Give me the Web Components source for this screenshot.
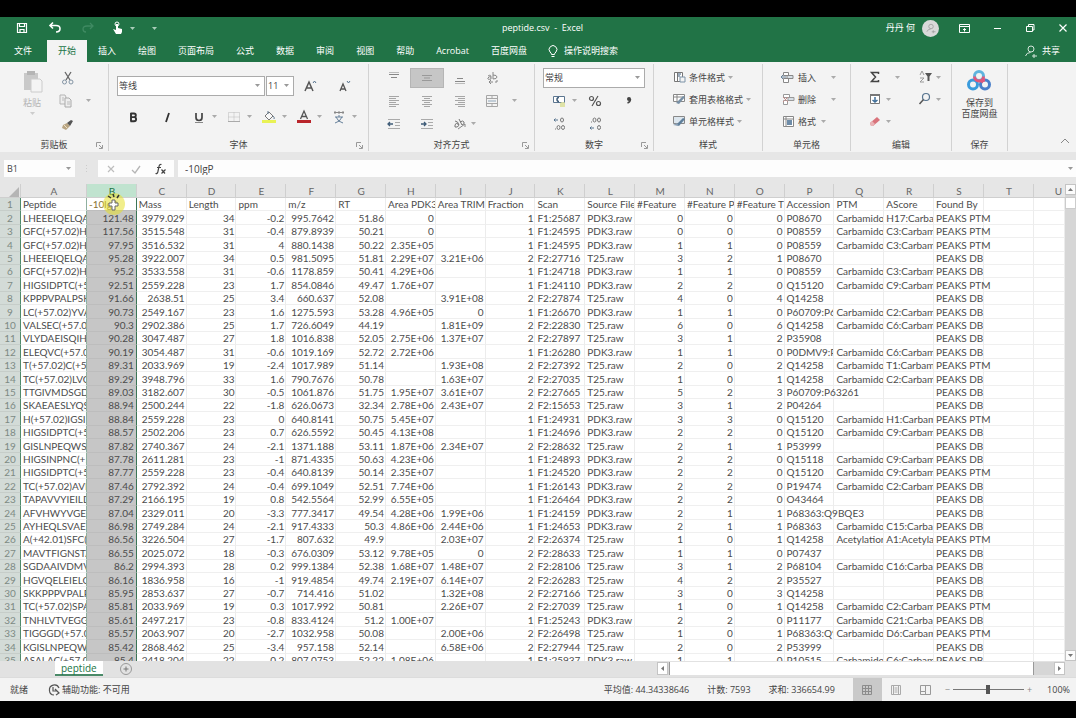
<!DOCTYPE html>
<html lang="zh-CN">
<head>
<meta charset="utf-8">
<meta name="viewport" content="width=device-width, initial-scale=1">
<title>peptide.csv - Excel</title>
<style>
  html, body { margin: 0; height: 100%; background: #000; }
  body { font: 9px/12px "Open Sans", "Noto Sans CJK SC", sans-serif; color: #444; }
</style>
</head>
<body>

<excel-app>
  <title-bar slot="top" name="peptide.csv&nbsp; -&nbsp; Excel" user="丹丹 何"></title-bar>
  <tab-bar slot="top"></tab-bar>
  <tool-ribbon slot="top">

    <ribbon-group label="剪贴板" launcher class="clipboard">
      <tool-button icon="paste" big caret disabled label="粘贴">粘贴</tool-button>
      <div class="stack">
        <tool-button icon="cut" label="剪切"></tool-button>
        <tool-button icon="copy" caret gap="wide" label="复制"></tool-button>
        <tool-button icon="brush" label="格式刷"></tool-button>
      </div>
    </ribbon-group>

    <ribbon-group label="字体" launcher class="font">
      <div class="fontline">
        <pick-list value="等线" label="字体名称"></pick-list>
        <pick-list value="11" label="字号"></pick-list>
        <tool-button icon="grow" label="增大字号"></tool-button>
        <tool-button icon="shrink" label="减小字号"></tool-button>
      </div>
      <div class="styleline">
        <tool-button icon="bold" label="加粗"></tool-button>
        <tool-button icon="italic" label="倾斜"></tool-button>
        <tool-button icon="underline" caret label="下划线"></tool-button>
        <tool-button icon="borders" caret label="边框"></tool-button>
        <tool-button icon="fill" caret label="填充颜色"></tool-button>
        <tool-button icon="color" caret label="字体颜色"></tool-button>
        <tool-button icon="phonetic" caret label="拼音"></tool-button>
      </div>
    </ribbon-group>

    <ribbon-group label="对齐方式" launcher class="align">
      <tool-button icon="top" label="顶端对齐"></tool-button>
      <tool-button icon="middle" active label="垂直居中"></tool-button>
      <tool-button icon="bottom" label="底端对齐"></tool-button>
      <tool-button icon="wrap" label="自动换行"></tool-button>
      <tool-button icon="left" label="左对齐"></tool-button>
      <tool-button icon="center" label="居中"></tool-button>
      <tool-button icon="right" label="右对齐"></tool-button>
      <tool-button icon="merge" caret gap="wide" label="合并后居中"></tool-button>
      <tool-button icon="outdent" label="减少缩进量"></tool-button>
      <tool-button icon="indent" label="增加缩进量"></tool-button>
      <tool-button icon="rotate" caret gap="none" label="方向"></tool-button>
    </ribbon-group>

    <ribbon-group label="数字" launcher class="number">
      <pick-list value="常规" label="数字格式"></pick-list>
      <div class="line">
        <tool-button icon="money" caret label="会计数字格式"></tool-button>
        <tool-button icon="percent" label="百分比样式"></tool-button>
        <tool-button icon="comma" label="千位分隔样式"></tool-button>
      </div>
      <div class="line">
        <tool-button icon="moredec" label="增加小数位数"></tool-button>
        <tool-button icon="lessdec" label="减少小数位数"></tool-button>
      </div>
    </ribbon-group>

    <ribbon-group label="样式" class="rows">
      <tool-button icon="conditional" caret gap="none">条件格式</tool-button>
      <tool-button icon="tablestyle" caret gap="none">套用表格格式</tool-button>
      <tool-button icon="cellstyle" caret gap="none">单元格样式</tool-button>
    </ribbon-group>

    <ribbon-group label="单元格" class="rows">
      <tool-button icon="insert" caret gap="far">插入</tool-button>
      <tool-button icon="delete" caret gap="far">删除</tool-button>
      <tool-button icon="format" caret>格式</tool-button>
    </ribbon-group>

    <ribbon-group label="编辑" class="edit">
      <tool-button icon="sum" caret gap="wide" label="自动求和"></tool-button>
      <tool-button icon="sort" caret gap="none" label="排序和筛选"></tool-button>
      <tool-button icon="filldown" caret gap="none" label="填充"></tool-button>
      <tool-button icon="find" caret gap="none" label="查找和选择"></tool-button>
      <tool-button icon="eraser" caret gap="none" label="清除"></tool-button>
    </ribbon-group>

    <ribbon-group label="保存" class="save">
      <tool-button icon="baidu" big label="保存到百度网盘">保存到<br>百度网盘</tool-button>
    </ribbon-group>

    <ribbon-group class="last">
      <tool-button icon="collapse" label="折叠功能区"></tool-button>
    </ribbon-group>
  </tool-ribbon>
  <formula-bar slot="top" cell="B1" value="-10lgP"></formula-bar>

  <data-sheet></data-sheet>

  <sheet-tabs slot="bottom"><span>peptide</span></sheet-tabs>
  <status-bar slot="bottom"></status-bar>
</excel-app>

<script>
const G = 'fill="none" stroke="#888"'

// 16x16 icon bodies, big ones are 24x24
const icons = {
  paste: '<path d="M4 4h14v17H4z" fill="#c9c9c9"/><path d="M7 2h8v4H7z" fill="#b5b5b5"/><path d="M11 10h9l2 2v11H11z" fill="#f4f4f4" stroke="#ccc"/>',
  cut: '<path d="M5 2l5 8M11 2L6 10" fill="none" stroke="#666" stroke-width="1.3"/><circle cx="4.5" cy="12" r="2" fill="none" stroke="#8495a5"/><circle cx="11" cy="12" r="2" fill="none" stroke="#8495a5"/>',
  copy: '<path d="M2 2h5l1 2v7H2z" fill="#eee" stroke="#b5b5b5"/><path d="M7 5h4l2 2v7H7z" fill="#eee" stroke="#aaa"/><path d="M4 5h2M4 7h2M9 9h3M9 11h3" stroke="#bbb"/>',
  brush: '<path d="M3 9l4-2 3 3-4 4-4-2z" fill="#b9a583"/><path d="M7 7l3 3 3-5-2-1z" fill="#555"/><path d="M4 9l3 3" stroke="#efe1c2"/>',
  grow: '<path d="M3 13L7 4l4 9M4.500 10h5" fill="none" stroke="#555" stroke-width="1.500"/><path d="M11 5l1.500-2L14 5" fill="none" stroke="#57748f"/>',
  shrink: '<path d="M4 13l3-7 3 7M5 11h4" fill="none" stroke="#555" stroke-width="1.300"/><path d="M11 3l1.500 2L14 3" fill="none" stroke="#57748f"/>',
  bold: '<path d="M6 4v8.500M5.500 4.500H9a1.700 1.700 0 010 3.600H6h3a2 2 0 010 4.200H5.500" fill="none" stroke="#333" stroke-width="1.900"/>',
  italic: '<path d="M10 4L7 13" fill="none" stroke="#333" stroke-width="1.800"/>',
  underline: '<path d="M5 4v4.500q0 3 3 3t3-3V4" fill="none" stroke="#444" stroke-width="1.700"/><path d="M4 13.500h8" stroke="#888"/>',
  borders: '<path d="M2.500 3.500h11v9h-11zM8 3.500v9M2.500 8h11" fill="none" stroke="#bbb" stroke-dasharray="1 1"/><path d="M2 12.500h12" stroke="#aaa"/>',
  fill: '<path d="M4 7l4-4 4 4-4 4z" fill="#f8f8f8" stroke="#777"/><path d="M7 5V2M12 7q2 2 1 3" fill="none" stroke="#60788e"/><path d="M1 11h14v3H1z" fill="#e9f255"/>',
  color: '<path d="M4.500 10L8 2l3.500 8M6 7.500h4" fill="none" stroke="#555" stroke-width="1.300"/><path d="M1 11h14v3H1z" fill="#b9252b"/>',
  phonetic: '<path d="M3 3.500h10M4 2v3M8 2v3M12 2v3" stroke="#888"/><path d="M4 8h8M8 6v2M5 8q2 5 7 6M11 8q-2 5-7 6" fill="none" stroke="#66809a"/>',
  top: `<path d="M3 4.500h10M5 7.500h6" ${G}/><path d="M3 2.500h10" stroke="#bbb"/>`,
  middle: '<path d="M3 5.500h10M5 8h6M3 10.500h10" stroke="#999"/>',
  bottom: `<path d="M5 8.500h6M3 11.500h10" ${G}/><path d="M3 13.500h10" stroke="#bbb"/>`,
  wrap: `<path d="M3 6q3-2 3 1v2q-4 1-3-1t3-1M8 2v7q4 0 4-2t-4-2M8 12H4l2-2M4 12l2 2M12 10v2h-2" ${G}/>`,
  left: '<path d="M3 3.500h10M3 5.500h7M3 7.500h10M3 9.500h7M3 11.500h10M3 13.500h7" stroke="#a6a6a6"/>',
  center: '<path d="M3 3.500h10M5 5.500h6M3 7.500h10M5 9.500h6M3 11.500h10M5 13.500h6" stroke="#a6a6a6"/>',
  right: '<path d="M3 3.500h10M6 5.500h7M3 7.500h10M6 9.500h7M3 11.500h10M6 13.500h7" stroke="#a6a6a6"/>',
  merge: '<path d="M2.500 2.500h11v11h-11zM2.500 5.500h11M2.500 10.500h11M8 3v2M8 11v2" fill="none" stroke="#a6a6a6"/><path d="M4 8h8" stroke="#8fa5b8"/>',
  outdent: '<path d="M2 3.500h12M9 6.500h5M9 9.500h5M2 12.500h12" stroke="#aaa"/><path d="M7 8H2M4 6L2 8l2 2" fill="none" stroke="#3f5c78" stroke-width="1.300"/>',
  indent: '<path d="M2 3.500h12M9 6.500h5M9 9.500h5M2 12.500h12" stroke="#aaa"/><path d="M2 8h5M5 6l2 2-2 2" fill="none" stroke="#3f5c78" stroke-width="1.300"/>',
  rotate: '<path d="M3 5q3 0 4 4M3 9q1-3 3-1t-1 3-2-2M7 3l3 6q3-1 2-3T8 6" fill="none" stroke="#777"/><path d="M6 13l7-5M13 8v3" fill="none" stroke="#888"/>',
  money: '<path d="M2.500 3.500h11v6h-11z" fill="#fff" stroke="#5c7690"/><path d="M8 4.500q-2 0-2 2t2 2" fill="none" stroke="#3f5c78" stroke-width="1.500"/><path d="M9 10q3-2 5 0v4H9z" fill="#dfe3a7"/>',
  percent: '<circle cx="4.500" cy="5.500" r="2" fill="none" stroke="#555" stroke-width="1.200"/><circle cx="11.500" cy="10.500" r="2" fill="none" stroke="#555" stroke-width="1.200"/><path d="M11 3L5 13" stroke="#555" stroke-width="1.200"/>',
  comma: '<circle cx="8" cy="6" r="2" fill="#444"/><path d="M9.500 6q0 3-3 4" fill="none" stroke="#444" stroke-width="1.500"/>',
  moredec: '<path d="M7 4H3M4.500 2.500L3 4l1.500 1.500" fill="none" stroke="#57748f"/><ellipse cx="11" cy="4" rx="1.500" ry="2" fill="none" stroke="#777"/><ellipse cx="7.500" cy="11.500" rx="1.500" ry="2" fill="none" stroke="#777"/><ellipse cx="12" cy="11.500" rx="1.500" ry="2" fill="none" stroke="#777"/><path d="M4 13h1" stroke="#777"/>',
  lessdec: '<path d="M3 12h4M4.500 10.500L3 12l1.500 1.500" fill="none" stroke="#57748f"/><ellipse cx="7.500" cy="4" rx="1.500" ry="2" fill="none" stroke="#777"/><ellipse cx="12" cy="4" rx="1.500" ry="2" fill="none" stroke="#777"/><ellipse cx="12" cy="11.500" rx="1.500" ry="2" fill="none" stroke="#777"/><path d="M4 6h1" stroke="#777"/>',
  conditional: '<path d="M3.500 3.500h8v9h-8zM6.500 3v9" fill="#fff" stroke="#777"/><path d="M7 5h3M7 7h2" stroke="#7d93a8" stroke-width="1.500"/><path d="M9 8h5v5H9z" fill="#f4f4f4" stroke="#7d93a8"/>',
  tablestyle: '<path d="M2.500 3.500h11v7h-11zM2.500 6h11M6 3.500v7" fill="#fff" stroke="#888"/><path d="M5 12l7-7 2 1-6 7z" fill="#7890a6"/>',
  cellstyle: '<path d="M2.500 3.500h11v7h-11z" fill="#dce6ee" stroke="#888"/><path d="M5 12l7-7 2 1-6 7z" fill="#5f7f9b"/><path d="M2 12l4-2 2 3z" fill="#8aa0b5"/>',
  insert: '<path d="M3.500 3.500h5v3h-5zM3.500 9.500h5v4h-5z" fill="#fff" stroke="#888"/><path d="M7 6.500h6v3H7z" fill="#d7dfe6" stroke="#888"/><path d="M6 8H1M3 6L1 8l2 2" fill="none" stroke="#69839b"/>',
  delete: '<path d="M3.500 3.500h6v3h-6zM3.500 9.500h4v4h-4z" fill="#fff" stroke="#999"/><path d="M8 6.500h6v3H8z" fill="#d7dfe6" stroke="#999"/><path d="M3 6l5 5M8 6l-5 5" stroke="#c28a88"/>',
  format: '<path d="M3.500 3.500h10v10h-10zM3.500 6h10M6 3.500v10" fill="#fff" stroke="#888"/><path d="M7 7h5v5H7z" fill="#6e8ca8"/>',
  sum: '<path d="M11.500 5V3.500h-7L8.500 8l-4 4.500h7V11" fill="none" stroke="#444" stroke-width="1.500"/>',
  sort: '<path d="M3 6l2-4 2 4M3 9h4l-4 4h4" fill="none" stroke="#999"/><path d="M8 4h7l-2.500 3.500V12h-2V7.500z" fill="#555"/>',
  filldown: '<path d="M3.500 3.500h9v9h-9z" fill="#fff" stroke="#777"/><path d="M3 4h10" stroke="#777" stroke-width="2"/><path d="M8 6v5M5.500 9L8 11l2.500-2" fill="none" stroke="#3f6f9a" stroke-width="1.500"/>',
  find: '<circle cx="9" cy="6" r="3.500" fill="none" stroke="#57748f" stroke-width="1.200"/><path d="M6.500 8.500L2.500 13" stroke="#555" stroke-width="1.500"/>',
  eraser: '<path d="M3 10l7-6 3 3-7 6H4z" fill="#d9737b"/><path d="M3 10l2-2 3 3-2 2H4z" fill="#e9b3b6"/>',
  baidu: '<g fill="none" stroke-width="3"><circle cx="12" cy="7" r="4.500" stroke="#5fb3de"/><circle cx="6" cy="15.500" r="4.500" stroke="#3a9bdc"/><circle cx="18" cy="15.500" r="4.500" stroke="#4a7fc9"/><path d="M7.500 7.500a4.500 4.500 0 009 0" stroke="#e0587c"/><path d="M14 13.500a4.500 4.500 0 014-2.500" stroke="#e0587c"/></g>',
  collapse: '<path d="M5 10l4-4 4 4" fill="none" stroke="#888"/>',
  save: '<path d="M3.500 3.500h9v9h-9zM5.500 3.500v3h5v-3M6 12.500v-3h4v3" fill="none" stroke="#fff" stroke-width="1.200"/>',
  undo: '<path d="M6 2.500L3 5.500l3 3M3 5.500h6q4 0 4 3.200T9 12" fill="none" stroke="#fff" stroke-width="1.600"/>',
  redo: '<path d="M10 3l3 3-3 3M13 6H7q-4 0-4 3t3 3" fill="none" stroke="#3f8a62" stroke-width="1.300"/>',
  touch: '<circle cx="7" cy="4" r="2" fill="none" stroke="#fff"/><path d="M6 4h2v4l4 1v3l-1 2H6L3 9l3 1z" fill="#fff"/>',
  display: '<path d="M3.500 4.500h10v8h-10zM3.500 6.500h10M8.500 11.500v-3M7 10l1.500-1.500L10 10" fill="none" stroke="#fff"/>',
  min: '<path d="M5 8.500h7" stroke="#fff"/>',
  restore: '<path d="M4.500 6.500h6v5h-6zM6.500 6V4.500h5.500v5.500h-1" fill="none" stroke="#fff"/>',
  close: '<path d="M4.500 4.500l7 7M11.500 4.500l-7 7" stroke="#fff" stroke-width="1.200"/>',
  bulb: '<path d="M6.500 11.500q0-1.500-1.500-2.500a3.900 3.900 0 116 0q-1.500 1-1.500 2.500zM6.500 13.500h3" fill="none" stroke="#fff"/>',
  person: '<circle cx="8" cy="6" r="3" fill="none" stroke="#d6e6dc"/><path d="M2.500 13q1-3.500 5-3.500M11 11v4M9 13h5" fill="none" stroke="#d6e6dc"/>',
  cancel: '<path d="M5 5l6 6M11 5l-6 6" stroke="#bdbdbd" stroke-width="1.200"/>',
  enter: '<path d="M4 9l3 3 5-7" fill="none" stroke="#b5b5b5" stroke-width="1.300"/>',
  fx: '<path d="M8.500 3.500q-2-.5-2.500 2L4.800 11q-.5 2-2.300 1.500M4 6.500h4M8.500 8.500l3.500 4M12.500 8.500l-4 4" fill="none" stroke="#444" stroke-width="1.200"/>',
  plus: '<circle cx="8" cy="8" r="5.500" fill="none" stroke="#999"/><path d="M8 5.500v5M5.500 8h5" stroke="#777"/>',
  access: '<path d="M13 6A5 5 0 108 13M7 5v4h4l-2-2M11 9l2 2-3 2" fill="none" stroke="#555" stroke-width="1.200"/>',
  normal: '<path d="M3.500 3.500h9v9h-9zM3.500 6.500h9M3.500 9.500h9M6.500 3.500v9M9.500 3.500v9" fill="none" stroke="#8c8c8c"/>',
  layout: '<path d="M3.500 3.500h9v9h-9zM5.500 3.500v9M10.500 3.500v9M6.500 6h3M6.500 8h3M6.500 10h3" fill="none" stroke="#aaa"/>',
  pagebreak: '<path d="M3.500 3.500h10v9h-10zM3.500 9.500h5v-6M8.500 9.500v3" fill="none" stroke="#999"/>'
}

const svg = (name, size = 16, box = 16) =>
  `<svg width="${size}" height="${size}" viewBox="0 0 ${box} ${box}" aria-hidden="true">${icons[name]}</svg>`

const caret = '<svg class="caret" width="5" height="3" viewBox="0 0 5 3" aria-hidden="true"><path d="M0 0h5L2.500 3z" fill="currentColor"/></svg>'

const reset = `
  * { box-sizing: border-box; }
  svg { display: block; flex: none; }
  button, input, select { font: inherit; color: inherit; margin: 0; padding: 0; border: 0; background: none; border-radius: 0; outline: 0; }
`


class ExcelApp extends HTMLElement {
  constructor() {
    super()
    this.attachShadow({ mode: 'open' }).innerHTML = `
    <style>
      :host { display: flex; flex-direction: column; height: 100vh; box-sizing: border-box; padding: 17px 0; background: #000; }
      main { flex: 1; min-height: 0; display: flex; flex-direction: column; background: #e6e6e6; }
      .body { flex: 1; min-height: 0; display: flex; }
      ::slotted(data-sheet) { flex: 1; min-width: 0; }
    </style>
    <main>
      <slot name="top"></slot>
      <div class="body"><slot></slot></div>
      <slot name="bottom"></slot>
    </main>`
  }
}
customElements.define('excel-app', ExcelApp)


class TitleBar extends HTMLElement {
  connectedCallback() {
    this.attachShadow({ mode: 'open' }).innerHTML = `
    <style>${reset}
      :host { display: grid; grid-template-columns: 1fr auto 1fr; align-items: center; height: 22px; background: #217346; color: #fff; padding: 0 5px 0 14px; }
      .quick, .window { display: flex; align-items: center; }
      .quick { gap: 17px; }
      .touch { display: flex; align-items: center; gap: 4px; margin-left: -3px; }
      .window { justify-content: flex-end; gap: 17px; }
      .who { display: flex; align-items: center; gap: 7px; }
      .face { width: 17px; height: 17px; border-radius: 50%; background: #d9d9d9; display: flex; align-items: center; justify-content: center; }
      .face circle, .face path { stroke: #999; }
      .caret { color: #a9cdb9; }
    </style>
    <div class="quick">
      <button aria-label="保存">${svg('save')}</button>
      <button aria-label="撤消">${svg('undo')}</button>
      <button aria-label="恢复">${svg('redo')}</button>
      <button class="touch" aria-label="触摸/鼠标模式">${svg('touch')}${caret}</button>
      <button aria-label="自定义快速访问工具栏">${caret}</button>
    </div>
    <span>${this.getAttribute('name')}</span>
    <div class="window">
      <div class="who"><span>${this.getAttribute('user')}</span><span class="face">${svg('person', 12)}</span></div>
      <button aria-label="功能区显示选项">${svg('display')}</button>
      <button aria-label="最小化">${svg('min')}</button>
      <button aria-label="还原">${svg('restore')}</button>
      <button aria-label="关闭">${svg('close')}</button>
    </div>`
  }
}
customElements.define('title-bar', TitleBar)


class TabBar extends HTMLElement {
  connectedCallback() {
    const tabs = ['开始', '插入', '绘图', '页面布局', '公式', '数据', '审阅', '视图', '帮助', 'Acrobat', '百度网盘']
    this.attachShadow({ mode: 'open' }).innerHTML = `
    <style>${reset}
      :host { display: flex; align-items: stretch; height: 23px; background: #217346; color: #fff; padding-right: 16px; }
      button { padding: 0 11px; white-space: nowrap; }
      .file { margin-right: 4px; padding-left: 14px; }
      .on { background: #f3f3f3; color: #217346; margin-top: 1px; }
      .tell, .share { display: flex; align-items: center; gap: 3px; }
      .tell { padding-left: 7px; }
      .share { margin-left: auto; padding: 0; }
    </style>
    <button class="file">文件</button>
    ${tabs.map((t, i) => `<button class="${i === 0 ? 'on' : ''}">${t}</button>`).join('')}
    <button class="tell">${svg('bulb')}操作说明搜索</button>
    <button class="share">${svg('person')}共享</button>`
  }
}
customElements.define('tab-bar', TabBar)


class ToolRibbon extends HTMLElement {
  constructor() {
    super()
    this.attachShadow({ mode: 'open' }).innerHTML = `
    <style>
      :host { display: grid; grid-template-columns: 109fr 260fr 166fr 119fr 109fr 88fr 101fr 56fr 68fr; height: 90px; background: #f3f3f3; }
    </style>
    <slot></slot>`
  }
}
customElements.define('tool-ribbon', ToolRibbon)


class RibbonGroup extends HTMLElement {
  connectedCallback() {
    const label = this.getAttribute('label') || ''
    this.attachShadow({ mode: 'open' }).innerHTML = `
    <style>${reset}
      :host { display: flex; flex-direction: column; min-width: 0; border-right: 1px solid #d2d2d2; margin: 2px 0; }
      :host(.last) { border: 0; }
      .tools { flex: none; height: 69px; margin-top: 2px; display: grid; grid-template-rows: repeat(3, 23px); align-items: center; }
      :host(.clipboard) .tools { grid-template: 69px / 56px 1fr; padding-left: 4px; justify-items: center; }
      :host(.font) .tools { grid-template-rows: 39px 23px; padding-left: 8px; }
      :host(.align) .tools { grid-template-columns: repeat(4, 33px); padding-left: 8px; justify-items: center; }
      :host(.number) .tools { padding: 0 8px; }
      :host(.rows) .tools { grid-template-rows: repeat(3, 22px); padding-left: 17px; }
      :host(.edit) .tools { grid-template: repeat(3, 22px) / 50px 1fr; padding-left: 16px; }
      :host(.save) .tools { grid-template: 69px / 1fr; justify-items: center; }
      :host(.last) .tools { flex: 1; grid-template: 1fr / 1fr; align-items: end; justify-items: end; padding-right: 4px; }
      footer { flex: 1; display: grid; grid-template-columns: 12px 1fr 12px; align-items: center; text-align: center; padding-top: 4px; }
      :host(.last) footer { display: none; }
      footer span { grid-column: 2; }
      ::slotted(.stack) { display: grid; grid-template-rows: repeat(3, 23px); align-items: center; justify-self: stretch; }
      ::slotted(.fontline) { display: grid; grid-template-columns: 148px 28px 23px 33px; gap: 0 1px; align-items: center; justify-items: end; width: max-content; }
      ::slotted(.styleline) { display: grid; grid-template-columns: 34px 32px 35px 35px 35px 35px 26px; padding-left: 8px; }
      ::slotted(.line) { display: grid; grid-template-columns: 36px 34px 20px; padding-left: 8px; }
    </style>
    <div class="tools"><slot></slot></div>
    <footer><span>${label}</span>${this.hasAttribute('launcher') ? `<button aria-label="${label}设置"><svg width="7" height="7" viewBox="0 0 7 7"><path d="M.5 5V.5H5M3 3l3 3M6.500 3v3.500H3" fill="none" stroke="#999"/></svg></button>` : ''}</footer>`
  }
}
customElements.define('ribbon-group', RibbonGroup)


class ToolButton extends HTMLElement {
  connectedCallback() {
    const big = this.hasAttribute('big')
    const label = this.getAttribute('label')
    this.attachShadow({ mode: 'open' }).innerHTML = `
    <style>${reset}
      :host { display: block; width: max-content; }
      button { display: flex; align-items: center; height: 20px; gap: 2px; white-space: nowrap; }
      .caret { color: #aaa; margin-left: 3px; }
      :host([gap=none]) .caret { margin-left: 1px; }
      :host([gap=wide]) .caret { margin-left: 10px; }
      :host([gap=far]) .caret { margin-left: 13px; }
      :host([active]) button { background: #c6c6c6; padding: 0 8px; border: 1px solid #b5b5b5; }
      :host([big]) button { flex-direction: column; height: 64px; gap: 4px; }
      :host([big]) .caret { margin: 0; color: #ccc; }
      :host([disabled]) { color: #b5b5b5; }
      .text { line-height: 11px; text-align: center; }
      :host([icon=copy]) button { margin-left: -2px; }
      :host([icon=merge]) button { margin-right: -16px; }
      :host([icon=rotate]) button { margin-right: -8px; }
    </style>
    <button ${label ? `aria-label="${label}"` : ''}>
      ${big ? svg(this.getAttribute('icon'), 24, 24) : svg(this.getAttribute('icon'))}
      ${this.textContent.trim() ? '<span class="text"><slot></slot></span>' : ''}
      ${this.hasAttribute('caret') ? caret : ''}
    </button>`
  }
}
customElements.define('tool-button', ToolButton)


class PickList extends HTMLElement {
  connectedCallback() {
    this.attachShadow({ mode: 'open' }).innerHTML = `
    <style>${reset}
      :host { display: grid; grid-template-columns: 1fr 9px; align-items: center; justify-self: stretch; height: 20px; background: #fff; border: 1px solid #ababab; box-sizing: border-box; }
      select { grid-area: 1 / 1 / 2 / 3; appearance: none; width: 100%; height: 100%; padding-left: 1px; }
      .caret { grid-area: 1 / 2; color: #999; pointer-events: none; }
    </style>
    <select aria-label="${this.getAttribute('label')}"><option>${this.getAttribute('value')}</option></select>${caret}`
  }
}
customElements.define('pick-list', PickList)


class FormulaBar extends HTMLElement {
  connectedCallback() {
    this.attachShadow({ mode: 'open' }).innerHTML = `
    <style>${reset}
      :host { display: grid; grid-template-columns: 71px 15px 76px 1fr; gap: 4px; padding: 8px 0 7px 4px; }
      div, label { display: flex; align-items: center; height: 17px; background: #fdfdfd; }
      .name { padding: 0 4px 0 3px; }
      .name input { flex: 1; min-width: 0; }
      .dots { background: none; justify-content: center; }
      .keys { justify-content: space-around; }
      .formula { padding: 0 3px 0 7px; font-size: 10px; }
      .formula input { flex: 1; min-width: 0; }
      .caret { color: #999; }
    </style>
    <label class="name"><input aria-label="名称框" value="${this.getAttribute('cell')}">${caret}</label>
    <div class="dots"><svg width="3" height="9" viewBox="0 0 3 9"><path d="M1 1h1v1H1zM1 4h1v1H1zM1 7h1v1H1z" fill="#ccc"/></svg></div>
    <div class="keys">
      <button aria-label="取消">${svg('cancel')}</button>
      <button aria-label="输入">${svg('enter')}</button>
      <button aria-label="插入函数">${svg('fx')}</button>
    </div>
    <label class="formula"><input aria-label="编辑栏" value="${this.getAttribute('value')}">${caret}</label>`
  }
}
customElements.define('formula-bar', FormulaBar)


const rows = `
Peptide|-10lgP|Mass|Length|ppm|m/z|RT|Area PDK3|Area TRIM|Fraction|Scan|Source File|#Feature|#Feature P|#Feature T|Accession|PTM|AScore|Found By
LHEEEIQELQAQ|121.48|3979.029|34|-0.2|995.7642|51.86|0||1|F1:25687|PDK3.raw|0|0|0|P08670|Carbamido|H17:Carba|PEAKS PTM
GFC(+57.02)HL|117.56|3515.548|31|-0.4|879.8939|50.21|0||1|F1:24595|PDK3.raw|0|0|0|P08559|Carbamido|C3:Carbam|PEAKS PTM
GFC(+57.02)HL|97.95|3516.532|31|4|880.1438|50.22|2.35E+05||1|F1:24595|PDK3.raw|1|1|0|P08559|Carbamido|C3:Carbam|PEAKS PTM
LHEEEIQELQAQ|95.28|3922.007|34|0.5|981.5095|51.81|2.29E+07|3.21E+06|2|F2:27716|T25.raw|3|2|1|P08670|||PEAKS DB
GFC(+57.02)HL|95.2|3533.558|31|-0.6|1178.859|50.41|4.29E+06||1|F1:24718|PDK3.raw|1|1|0|P08559|Carbamido|C3:Carbam|PEAKS DB
HIGSIDPTC(+57|92.51|2559.228|23|1.7|854.0846|49.47|1.76E+07||1|F1:24110|PDK3.raw|2|2|0|Q15120|Carbamido|C9:Carbam|PEAKS PTM
KPPPVPALPSKL|91.66|2638.51|25|3.4|660.637|52.08||3.91E+08|2|F2:27874|T25.raw|4|0|4|Q14258|||PEAKS DB
LC(+57.02)YVAL|90.73|2549.167|23|1.6|1275.593|53.28|4.96E+05|0|1|F1:26670|PDK3.raw|1|1|0|P60709:P63|Carbamido|C2:Carbam|PEAKS DB
VALSEC(+57.02|90.3|2902.386|25|1.7|726.6049|44.19||1.81E+09|2|F2:22830|T25.raw|6|0|6|Q14258|Carbamido|C6:Carbam|PEAKS DB
VLYDAEISQIHQ|90.28|3047.487|27|1.8|1016.838|52.05|2.75E+06|1.37E+07|2|F2:27897|T25.raw|3|1|2|P35908|||PEAKS DB
ELEQVC(+57.02|90.19|3054.487|31|-0.6|1019.169|52.72|2.72E+06||1|F1:26280|PDK3.raw|1|1|0|P0DMV9:P0|Carbamido|C6:Carbam|PEAKS DB
T(+57.02)C(+57|89.31|2033.969|19|-2.4|1017.989|51.14||1.93E+08|2|F2:27392|T25.raw|2|0|2|Q14258|Carbamido|T1:Carbam|PEAKS PTM
TC(+57.02)LVQ|89.29|3948.796|33|1.6|790.7676|50.78||1.63E+07|2|F2:27035|T25.raw|1|0|1|Q14258|Carbamido|C2:Carbam|PEAKS DB
TTGIVMDSGDG|89.03|3182.607|30|-0.5|1061.876|51.75|1.95E+07|3.61E+07|2|F2:27665|T25.raw|5|2|3|P60709:P63261|||PEAKS DB
SKAEAESLYQSK|88.94|2500.244|22|-1.8|626.0673|32.34|2.78E+06|2.43E+07|2|F2:15653|T25.raw|3|1|2|P04264|||PEAKS DB
H(+57.02)IGSID|88.84|2559.228|23|0|640.8141|50.75|5.45E+07||1|F1:24931|PDK3.raw|3|3|0|Q15120|Carbamido|H1:Carbam|PEAKS PTM
HIGSIDPTC(+57|88.57|2502.206|23|0.7|626.5592|50.45|4.13E+08||1|F1:24696|PDK3.raw|2|2|0|Q15120|Carbamido|C9:Carbam|PEAKS DB
GISLNPEQWSQ|87.82|2740.367|24|-2.1|1371.188|53.11|1.87E+06|2.34E+07|2|F2:28632|T25.raw|2|1|1|P53999|||PEAKS DB
HIGSINPNC(+57|87.78|2611.281|23|-1|871.4335|50.63|4.23E+06||1|F1:24893|PDK3.raw|2|2|0|Q15118|Carbamido|C9:Carbam|PEAKS DB
HIGSIDPTC(+57|87.77|2559.228|23|-0.4|640.8139|50.14|2.35E+07||1|F1:24520|PDK3.raw|2|2|0|Q15120|Carbamido|C9:Carbam|PEAKS PTM
TC(+57.02)AVL|87.46|2792.392|24|-0.4|699.1049|52.51|7.74E+06||1|F1:26143|PDK3.raw|2|2|0|P19474|Carbamido|C2:Carbam|PEAKS DB
TAPAVVYIEILD|87.29|2166.195|19|0.8|542.5564|52.99|6.55E+05||1|F1:26464|PDK3.raw|2|2|0|O43464|||PEAKS DB
AFVHWYVGEG|87.04|2329.011|20|-3.3|777.3417|49.54|4.28E+06|1.99E+06|1|F1:24159|PDK3.raw|2|1|1|P68363:Q9BQE3|||PEAKS DB
AYHEQLSVAEI|86.98|2749.284|24|-2.1|917.4333|50.3|4.86E+06|2.44E+06|1|F1:24653|PDK3.raw|2|1|1|P68363|Carbamido|C15:Carba|PEAKS DB
A(+42.01)SFC(+|86.56|3226.504|27|-1.7|807.632|49.9||2.03E+07|2|F2:26374|T25.raw|1|0|1|Q14258|Acetylation|A1:Acetyla|PEAKS PTM
MAVTFIGNSTA|86.55|2025.072|18|-0.3|676.0309|53.12|9.78E+05|0|2|F2:28633|T25.raw|1|1|0|P07437|||PEAKS DB
SGDAAIVDMVP|86.2|2994.393|28|0.2|999.1384|52.38|1.68E+07|1.48E+07|2|F2:28106|T25.raw|3|1|2|P68104|Carbamido|C16:Carba|PEAKS DB
HGVQELEIELQS|86.16|1836.958|16|-1|919.4854|49.74|2.19E+07|6.14E+07|2|F2:26283|T25.raw|4|2|2|P35527|||PEAKS DB
SKKPPPVPALPS|85.95|2853.637|27|-0.7|714.416|51.02||1.32E+08|2|F2:27166|T25.raw|3|0|3|Q14258|||PEAKS DB
TC(+57.02)SPAL|85.81|2033.969|19|0.3|1017.992|50.81||2.26E+07|2|F2:27039|T25.raw|1|0|1|Q14258|Carbamido|C2:Carbam|PEAKS PTM
TNHLVTVEGGW|85.61|2497.217|23|-0.8|833.4124|51.2|1.00E+07||1|F1:25243|PDK3.raw|2|2|0|P11177|Carbamido|C21:Carba|PEAKS DB
TIGGGD(+57.02|85.57|2063.907|20|-2.7|1032.958|50.08||2.00E+06|2|F2:26498|T25.raw|1|0|1|P68363:Q9|Carbamido|D6:Carbam|PEAKS PTM
KGISLNPEQWS|85.42|2868.462|25|-3.4|957.158|52.14||6.58E+06|2|F2:27944|T25.raw|2|0|2|P53999|||PEAKS DB
ASALAC(+57.02|85.4|2418.204|22|0.2|807.0753|52.22|1.08E+06||1|F1:25937|PDK3.raw|1|1|0|P10515|Carbamido|C6:Carbam|PEAKS DB
`.trim().split('\n').map(line => line.split('|'))

const letters = 'ABCDEFGHIJKLMNOPQRSTU'.split('')

class DataSheet extends HTMLElement {

  cell(row, c) {
    const text = row[c] || ''
    const cls = []
    if (/^-?[\d.]+(E\+\d+)?$/.test(text)) cls.push('num')
    if (text && !row[c + 1]) cls.push('spill')
    return `<td class="${cls.join(' ')}">${text}</td>`
  }

  connectedCallback() {
    this.attachShadow({ mode: 'open' }).innerHTML = `
    <style>${reset}
      :host { display: grid; grid-template-columns: 1fr 11px; min-height: 0; overflow: hidden; }
      .view { overflow: hidden; position: relative; background: #fff; }
      table { table-layout: fixed; width: 100%; border-collapse: separate; border-spacing: 0; font: 10px/12px Lato, sans-serif; color: #4c4c4c; }
      .rh { width: 21px; }
      .a { width: 66px; }
      .u { width: 31px; }
      tr { height: 13px; }
      tbody tr:nth-child(5n+2), tbody tr:nth-child(5n+4) { height: 14px; }
      thead tr { height: 14px; }
      th, td { padding: 0 1px 0 2px; white-space: nowrap; overflow: hidden; border-right: 1px solid #ececec; border-bottom: 1px solid #efefef; text-align: left; font-weight: 400; }
      .num { text-align: right; }
      .spill { overflow: visible; }
      thead th { background: #e6e6e6; border-color: #cfcfcf; text-align: center; color: #666; }
      thead th:last-child { text-align: right; padding-right: 3px; border-right: 0; }
      thead .sel { background: #c0e3cf; color: #217346; }
      tbody th { background: #d3dbd7; border-right: 1px solid #4f8a6b; border-bottom-color: #c6cdc9; text-align: center; color: #7d8a84; padding: 0; }
      td:nth-child(2) { border-right-color: #8fb09f; }
      td:nth-child(3) { background: #c6c6c6; border-right-color: #3b7556; border-bottom-color: #bdbdbd; padding-right: 2px; }
      tbody tr:first-child td:nth-child(3) { background: #fff; color: #8a7434; }
      .corner { text-align: right; }
      .corner svg { display: inline-block; vertical-align: bottom; }
      .pointer { position: absolute; left: 101px; top: 8px; }
      .bar { display: flex; flex-direction: column; gap: 2px; background: #d6d6d6; }
      .bar button { height: 11px; display: flex; align-items: center; justify-content: center; background: #fbfbfb; border: 1px solid #c4c4c4; color: #777; }
      .bar .up svg { transform: rotate(180deg); }
      .bar .thumb { height: 12px; background: #fff; border: 1px solid #ccc; }
      .bar .down { margin-top: auto; }
    </style>
    <div class="view">
      <table>
        <colgroup><col class="rh"><col class="a"><col span="19"><col class="u"></colgroup>
        <thead><tr>
          <th class="corner"><svg width="10" height="10" viewBox="0 0 10 10"><path d="M10 0v10H0z" fill="#b5b5b5"/></svg></th>
          ${letters.map(l => `<th class="${l === 'B' ? 'sel' : ''}">${l}</th>`).join('')}
        </tr></thead>
        <tbody>
          ${rows.map((row, r) => `<tr><th>${r + 1}</th>${letters.map((l, c) => this.cell(row, c)).join('')}</tr>`).join('')}
        </tbody>
      </table>
      <svg class="pointer" width="26" height="26" viewBox="0 0 26 26" aria-hidden="true">
        <circle cx="13" cy="12" r="11" fill="#e6e02c" opacity=".55"/>
        <path d="M7 4l3 2M12 2l1 3M18 3l-2 3" stroke="#333" stroke-width="1.500"/>
        <path d="M11 8h3v3h3v3h-3v4h-3v-4H8v-3h3z" fill="#fff" stroke="#666"/>
      </svg>
    </div>
    <div class="bar">
      <button class="up" aria-label="向上滚动">${caret}</button>
      <div class="thumb"></div>
      <button class="down" aria-label="向下滚动">${caret}</button>
    </div>`
  }
}
customElements.define('data-sheet', DataSheet)


class SheetTabs extends HTMLElement {
  connectedCallback() {
    this.attachShadow({ mode: 'open' }).innerHTML = `
    <style>${reset}
      :host { display: flex; align-items: stretch; height: 16px; background: #e2e2e2; padding-left: 55px; }
      .tab { background: #fff; color: #217346; font-size: 10px; padding: 0 6px; border-bottom: 2px solid #4a8a68; height: 15px; line-height: 12px; }
      .add { margin-left: 15px; }
      .scroll { margin: 1px 11px 2px auto; display: grid; grid-template-columns: 11px 1fr 11px; width: 40%; background: #d6d6d6; }
      .scroll button { display: flex; align-items: center; justify-content: center; background: #fff; border: 1px solid #c4c4c4; color: #777; }
      .prev svg { transform: rotate(90deg); }
      .next svg { transform: rotate(-90deg); }
      .thumb { background: #fff; border: 1px solid #999; border-width: 0 1px; margin: 0 20px 0 1px; }
    </style>
    <button class="tab"><slot></slot></button>
    <button class="add" aria-label="新工作表">${svg('plus', 16)}</button>
    <div class="scroll">
      <button class="prev" aria-label="向左滚动">${caret}</button>
      <div class="thumb"></div>
      <button class="next" aria-label="向右滚动">${caret}</button>
    </div>`
  }
}
customElements.define('sheet-tabs', SheetTabs)


class StatusBar extends HTMLElement {
  connectedCallback() {
    this.attachShadow({ mode: 'open' }).innerHTML = `
    <style>${reset}
      :host { display: flex; align-items: stretch; height: 23px; background: #f3f3f3; border-top: 1px solid #dcdcdc; padding: 0 6px 0 10px; white-space: nowrap; }
      span, div, .check { display: flex; align-items: center; }
      .check { margin-left: 18px; }
      .sums { margin-left: auto; gap: 18px; margin-right: 18px; }
      .views button { width: 29px; height: 100%; display: flex; align-items: center; justify-content: center; }
      .views .on { background: #c9c9c9; }
      .zoom { color: #888; gap: 3px; margin-left: 5px; }
      input { appearance: none; width: 71px; height: 12px; background: linear-gradient(#777, #777) center / 100% 1px no-repeat; }
      input::-webkit-slider-thumb { appearance: none; width: 4px; height: 9px; background: #555; }
      .pct { margin-left: 15px; }
    </style>
    <span>就绪</span>
    <button class="check">${svg('access')}辅助功能: 不可用</button>
    <div class="sums"><span>平均值: 44.34338646</span><span>计数: 7593</span><span>求和: 336654.99</span></div>
    <div class="views">
      <button class="on" aria-label="普通">${svg('normal')}</button>
      <button aria-label="页面布局">${svg('layout')}</button>
      <button aria-label="分页预览">${svg('pagebreak')}</button>
    </div>
    <div class="zoom">
      <button aria-label="缩小">−</button>
      <input type="range" aria-label="缩放" min="0" max="200" value="100">
      <button aria-label="放大">+</button>
    </div>
    <span class="pct">100%</span>`
  }
}
customElements.define('status-bar', StatusBar)
</script>
</body>
</html>
